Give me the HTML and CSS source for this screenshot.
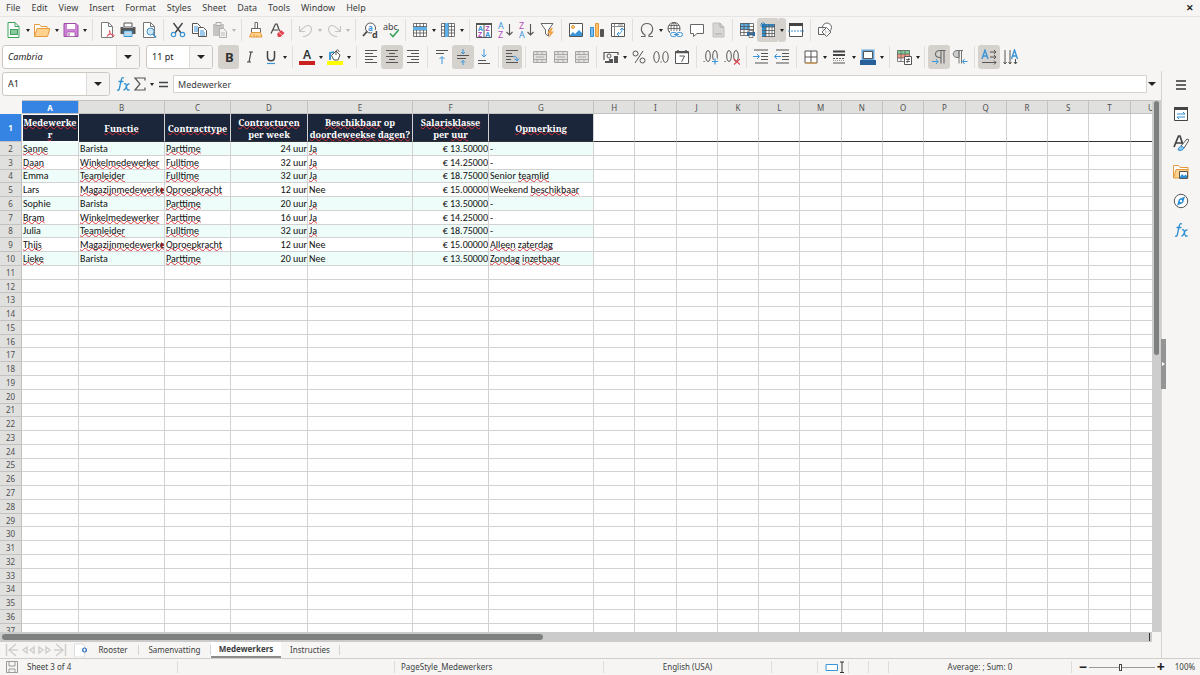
FILE: index.html
```html
<!DOCTYPE html>
<html lang="nl">
<head>
<meta charset="utf-8">
<title>Medewerkers</title>
<link rel="stylesheet" href="styles.css">
</head>
<body>
<svg class="defs" aria-hidden="true">
  <defs>
    <g id="i-new"><path d="M2 .5h7l4 4v11H2z" fill="#fff" stroke="#3da35d"/><path d="M9 .5v4h4" fill="none" stroke="#3da35d"/><path d="M4 7h8v6H4z" fill="#3da35d"/><path d="M5 9h6M5 11h6" stroke="#fff" stroke-width=".8"/></g>
    <g id="i-open"><path d="M.5 14V2.500h5l1.500 2h6v3" fill="#fff" stroke="#e59a3c"/><path d="M.5 14.500 3 6.500h13l-2.500 8z" fill="#ffd28f" stroke="#e59a3c"/></g>
    <g id="i-save"><path d="M1 1.500h12l2 2v11H1z" fill="#cf83d6" stroke="#9c4ea5"/><path d="M4 2h8v5H4z" fill="#fff"/><path d="M4 10h8v4.500H4z" fill="#fff" stroke="#9c4ea5" stroke-width=".7"/><path d="M6 11v3" stroke="#9c4ea5"/></g>
    <g id="i-pdf"><path d="M2.500.5h7l4 4v11h-11z" fill="#fff" stroke="#7c7c7c"/><path d="M9.500.5v4h4" fill="none" stroke="#7c7c7c"/><path d="M7.500 15c3-2 3.500-5 3-7M8 13.500c2-1.500 5-1.500 7.500 0M10.500 9c.5 2 2 4 4.500 6" fill="none" stroke="#e2545f"/></g>
    <g id="i-print"><path d="M4 1h8v4H4z" fill="#fff" stroke="#555"/><path d="M.5 5h15v7H.5z" fill="#555"/><path d="M3 5.500h10" stroke="#aaa"/><path d="M4 9h8v5.500H4z" fill="#fff" stroke="#2f8fd3"/><path d="M5 11h6M5 13h6" stroke="#6cb5e6"/></g>
    <g id="i-preview"><path d="M2.500.5h7l4 4v11h-11z" fill="#fff" stroke="#777"/><path d="M9.500.5v4h4" fill="none" stroke="#777"/><circle cx="9.500" cy="9.500" r="3.500" fill="#cfe7f8" stroke="#3f8fca"/><path d="m12 12 3 3.500" stroke="#3f8fca" stroke-width="1.500"/></g>
    <g id="i-cut"><path d="M3.500 1 11 11M12.500 1 5 11" stroke="#444" stroke-width="1.400"/><circle cx="3.500" cy="12.500" r="2.200" fill="#fff" stroke="#3a94d8" stroke-width="1.200"/><circle cx="12.500" cy="12.500" r="2.200" fill="#fff" stroke="#3a94d8" stroke-width="1.200"/></g>
    <g id="i-copy"><path d="M1.500 1.500h5l3 3v7h-8z" fill="#fff" stroke="#555"/><path d="M3 5h4M3 7h4M3 9h4" stroke="#3a94d8"/><path d="M7.500 5.500h5l3 3v6h-8z" fill="#fff" stroke="#555"/><path d="M9 9h4M9 11h5M9 13h5" stroke="#3a94d8"/></g>
    <g id="i-paste"><path d="M1 2h11v12H1z" fill="#c5c4c3"/><path d="M4 .5h5v3H4z" fill="#eee" stroke="#aaa"/><path d="M7.500 6.500h4l3 3v6h-7z" fill="#f2f2f2" stroke="#b0afae"/><path d="M9 11h4M9 13h4" stroke="#bbb"/></g>
    <g id="i-brush"><path d="M7 .5h2.500v6H7z" fill="#fff" stroke="#666"/><path d="M3.500 6.500h9v4h-9z" fill="#fff" stroke="#666"/><path d="M3.500 10.500h9l1.500 4.500H1.500z" fill="#ffd28f" stroke="#e59a3c"/><path d="M6 15v-3M9 15v-2" stroke="#e59a3c"/></g>
    <g id="i-clear"><path d="M2 11.500 6.500 2h1.500l2.500 7M4 8h5" fill="none" stroke="#444" stroke-width="1.200"/><path d="m8 12 4-4 3.500 3-4 4H9z" fill="#e2454f"/><path d="m10 10.500 3 2.500" stroke="#f7a5aa"/></g>
    <g id="i-undo"><path d="M5 14.500h2c8-3 8-11 3-11-3 0-5 3-8 5.500M1.500 4v5.500H7" fill="none" stroke="#c5c4c2" stroke-width="1.100"/></g>
    <g id="i-redo"><path d="M11 14.500H9c-8-3-8-11-3-11 3 0 5 3 8 5.500M14.500 4v5.500H9" fill="none" stroke="#c5c4c2" stroke-width="1.100"/></g>
    <g id="i-find"><circle cx="8.500" cy="6" r="5" fill="#fff" stroke="#555"/><path d="M5 9.500 1 14" stroke="#444" stroke-width="1.800"/><path d="M10 8h6v8h-6z" fill="#f6f5f4"/><text x="6" y="9" font-size="8" font-weight="700" fill="#3a94d8">a</text><text x="10" y="15.500" font-size="9" font-weight="700" fill="#444">d</text></g>
    <g id="i-abc"><text x="0" y="7.500" font-size="9" fill="#444">abc</text><path d="m7 11.500 3 3 6-7" fill="none" stroke="#3da35d" stroke-width="1.600"/></g>
    <g id="i-row"><path d="M1.500 1.500h13v13h-13z" fill="#fff"/><path d="M1.500 1.500h13v13h-13zM4.500 1v14M8 1v14M11.500 1v14M1 11h14M1 8h14M1 4.500h14" fill="none" stroke="#555" stroke-width=".8"/><path d="M1 5h14v3H1z" fill="#5eb0ea"/></g>
    <g id="i-col"><path d="M1.500 1.500h13v13h-13z" fill="#fff"/><path d="M1.500 1.500h13v13h-13zM4.500 1v14M8.500 1v14M11.500 1v14M1 11h14M1 8h14M1 4.500h14" fill="none" stroke="#555" stroke-width=".8"/><path d="M5 1h3.500v14H5z" fill="#5eb0ea"/></g>
    <g id="i-sort"><path d="M.5 1.500h15v14H.5z" fill="#fff" stroke="#555"/><path d="M0 2h16" stroke="#555" stroke-width="2"/><path d="M8 2v13.500" stroke="#555"/><g font-size="7" font-weight="700"><text x="2" y="9" fill="#3a94d8">A</text><text x="2" y="15" fill="#b44dbd">Z</text><text x="9.500" y="9" fill="#b44dbd">Z</text><text x="9.300" y="15" fill="#3a94d8">A</text></g></g>
    <g id="i-az"><text x="1" y="7" font-size="9" fill="#3a94d8">A</text><text x="1" y="15.500" font-size="9" fill="#b44dbd">Z</text><path d="M12.500 2v11M9.500 10l3 3 3-3" fill="none" stroke="#555" stroke-width="1.100"/></g>
    <g id="i-za"><text x="1" y="7" font-size="9" fill="#b44dbd">Z</text><text x="1" y="15.500" font-size="9" fill="#3a94d8">A</text><path d="M12.500 2v11M9.500 10l3 3 3-3" fill="none" stroke="#555" stroke-width="1.100"/></g>
    <g id="i-filter"><path d="M2 1.500h12L9.500 8v6L6.500 12V8z" fill="#fff" stroke="#666"/><path d="M12 6 8 11.500h3L9.500 16 15 9.500h-3L14 6z" fill="#f0a040"/></g>
    <g id="i-image"><path d="M1.500 1.500h13v13h-13z" fill="#fff" stroke="#555"/><circle cx="5" cy="5" r="1.500" fill="#ffd28f" stroke="#e59a3c"/><path d="m2 13 3-3 2 2 4-4 3 3v3H2z" fill="#3a94d8"/></g>
    <g id="i-chart"><path d="M1.500 5.500h3v9h-3z" fill="#78bdea" stroke="#2f8fd3"/><path d="M6.500 1.500h3v13h-3z" fill="#ffc06a" stroke="#e59a3c"/><path d="M11.500 7.500h3v7h-3z" fill="#555" stroke="#555"/></g>
    <g id="i-pivot"><path d="M1.500 1.500h13v13h-13z" fill="#fff" stroke="#555"/><path d="M1.500 4.500h13M4.500 2v12M8 3h5" stroke="#888"/><path d="M12 6c0 4-1 6-5 6M10 8l2-2 2 2M9 10l-2 2 2 2" fill="none" stroke="#3a94d8"/></g>
    <g id="i-omega"><path d="M2 14.500h4v-1.500C0 9 2 1.500 8 1.500S16 9 10 13v1.500h4" fill="none" stroke="#666" stroke-width="1.200"/></g>
    <g id="i-link"><circle cx="7" cy="6.500" r="6" fill="#fff" stroke="#555"/><path d="M1 6.500h12M7 .5v12M2 3.500h10M2 9.500h10" stroke="#555" stroke-width=".8"/><ellipse cx="7" cy="6.500" rx="3" ry="6" fill="none" stroke="#555" stroke-width=".8"/><path d="M3 9h13v7H3z" fill="#f6f5f4"/><rect x="3.500" y="10.500" width="6" height="4" rx="2" fill="none" stroke="#3a94d8"/><rect x="9.500" y="10.500" width="6" height="4" rx="2" fill="none" stroke="#3a94d8"/><path d="M7 12.500h5" stroke="#3a94d8"/></g>
    <g id="i-comment"><path d="M1.500 2.500h13v9H8l-3.500 3v-3h-3z" fill="#fff" stroke="#666"/></g>
    <g id="i-doc"><path d="M3 1h7l4 4v10H3z" fill="#d7d6d5" stroke="#c0bfbe"/><path d="M10 1v4h4M5 12h7" fill="none" stroke="#aaa"/></g>
    <g id="i-prange"><path d="M1.500 1.500h13v12h-13z" fill="#fff"/><path d="M1 1h10v7H1z" fill="#5eb0ea"/><path d="M1.500 1.500h13v12h-13zM5 1v12M9 1v12M1 4.500h14M1 7.500h14M1 10.500h14" fill="none" stroke="#555" stroke-width=".8"/><path d="M8 10h8v4H8z" fill="#2f6da3"/><path d="M10 8.500h4v2h-4zM10 13h4v2.500h-4z" fill="#fff" stroke="#555" stroke-width=".7"/></g>
    <g id="i-freeze"><path d="M2 2h13v13H2z" fill="#fff"/><path d="M2 2h13v3H2zM2 2h4v13H2z" fill="#2f8fd3"/><path d="M2 5h13M2 8.500h13M2 11.500h13M6 2v13M9 2v13M12 2v13M2 14.500h13M14.500 2v13" stroke="#555" stroke-width=".8"/><path d="M0 3h6M3 0v6M1 1l4 4M5 1 1 5" stroke="#1d72b8" stroke-width=".8"/></g>
    <g id="i-split"><path d="M1.500 1.500h13v13h-13z" fill="#fff" stroke="#555"/><path d="M1 2.500h14" stroke="#444" stroke-width="3"/><path d="M0 9h16" stroke="#3a94d8" stroke-dasharray="2 1"/></g>
    <g id="i-shapes"><circle cx="10" cy="5.500" r="4.500" fill="#fff" stroke="#666"/><path d="M1.500 5.500h7v7h-7z" fill="#fff" fill-opacity=".6" stroke="#666"/><path d="m9.500 5.500 4.500 4.500-4.500 4.500L5 10z" fill="#fff" fill-opacity=".7" stroke="#666"/></g>
    <g id="i-bold"><text x="4" y="13" font-size="13" font-weight="700" fill="#333">B</text></g>
    <g id="i-italic"><path d="M7 3h4M5 13h4M9 3l-2 10" stroke="#444" stroke-width="1.200"/></g>
    <g id="i-underline"><path d="M4.500 2v6c0 5 7 5 7 0V2" fill="none" stroke="#444" stroke-width="1.500"/><path d="M4 14.500h8" stroke="#3a94d8" stroke-width="1.200"/></g>
    <g id="i-color"><text x="4" y="10" font-size="12" font-weight="600" fill="#333">A</text><path d="M0 12h16v4H0z" fill="#c9211e"/></g>
    <g id="i-fill"><path d="M4.500 6.500 9 2l4 4-2 5H7z" fill="#fff" stroke="#555"/><path d="M9 6V2c1-2 3-1 3 1" fill="none" stroke="#555"/><path d="M3 11V4l4-1" fill="none" stroke="#2f8fd3" stroke-width="1.800"/><path d="M0 12h16v4H0z" fill="#ff0"/></g>
    <g id="i-left"><path d="M2 1.500h12M2 4.500h8M2 7.500h12M2 10.500h8M2 13.500h12" stroke="#555"/></g>
    <g id="i-center"><path d="M2 1.500h12M5 4.500h6M2 7.500h12M5 10.500h6M2 13.500h12" stroke="#555"/></g>
    <g id="i-right"><path d="M2 1.500h12M6 4.500h8M2 7.500h12M6 10.500h8M2 13.500h12" stroke="#555"/></g>
    <g id="i-top"><path d="M2 1.500h12M2 4.500h8" stroke="#555"/><path d="M8 15V8M5.500 10 8 7.500l2.500 2.500" fill="none" stroke="#3a94d8"/></g>
    <g id="i-mid"><path d="M2 6.500h12M2 9.500h9" stroke="#555"/><path d="M8 0v5M6 3l2 2 2-2M8 16v-4.500M6 13.500l2-2 2 2" fill="none" stroke="#3a94d8"/></g>
    <g id="i-bot"><path d="M2 14.500h12M2 11.500h8" stroke="#555"/><path d="M8 0v8M5.500 5.500 8 8l2.500-2.500" fill="none" stroke="#3a94d8"/></g>
    <g id="i-wrap"><path d="M2 1.500h12M2 4.500h6M2 7.500h7M2 10.500h5M2 13.500h12" stroke="#555"/><path d="M9 7.500c4 0 4 1 4 4M10.500 9.500l2.500 2.500 2-2.500" fill="none" stroke="#3a94d8"/></g>
    <g id="i-merge"><path d="M1.500 2.500h13v11h-13z" fill="#e2e1e0" stroke="#a5a4a3"/><path d="M1 5.500h14M1 10.500h14M5 2v3.500M10 2v3.500M5 10.500V14M10 10.500V14M4 8h8" stroke="#a5a4a3" stroke-width=".9"/></g>
    <g id="i-money"><path d="M1 11V3.500h14V6" fill="none" stroke="#555" stroke-width="1.200"/><circle cx="6" cy="7" r="2" fill="none" stroke="#555"/><path d="M6 10h4v4H6zM11 7h4v7h-4z" fill="#555"/><path d="M2 13h4" stroke="#555" stroke-width="2"/></g>
    <g id="i-percent"><circle cx="4.500" cy="4.500" r="2.500" fill="none" stroke="#555"/><circle cx="11.500" cy="11.500" r="2.500" fill="none" stroke="#555"/><path d="M12 2 4 14" stroke="#555"/></g>
    <g id="i-number"><ellipse cx="3.500" cy="8" rx="2.700" ry="5.500" fill="none" stroke="#555"/><ellipse cx="12.500" cy="8" rx="2.700" ry="5.500" fill="none" stroke="#555"/><path d="M7.500 13h1.200" stroke="#555"/></g>
    <g id="i-date"><path d="M1.500 2.500h13v12h-13z" fill="#fff" stroke="#555"/><path d="M1 3.500h14M4 1v3M12 1v3" stroke="#555" stroke-width="1.500"/><path d="M5.500 7h5L7.500 13" fill="none" stroke="#555"/></g>
    <g id="i-dadd"><ellipse cx="5" cy="7" rx="2.300" ry="5.500" fill="none" stroke="#555"/><ellipse cx="12" cy="7" rx="2.300" ry="5.500" fill="none" stroke="#555"/><path d="M.5 12.500h1.200" stroke="#555"/><path d="M9 12.500h7M12.500 9v7" stroke="#f6f5f4" stroke-width="3"/><path d="M9 12.500h6M12 9.500v6" stroke="#3a94d8" stroke-width="1.200"/></g>
    <g id="i-ddel"><ellipse cx="5" cy="7" rx="2.300" ry="5.500" fill="none" stroke="#555"/><ellipse cx="12" cy="7" rx="2.300" ry="5.500" fill="none" stroke="#555"/><path d="M.5 12.500h1.200" stroke="#555"/><path d="m10 10 6 5.500M16 10l-6 5.500" stroke="#e2454f" stroke-width="1.200"/></g>
    <g id="i-inc"><path d="M1 1h14M8 4.500h7M8 7.500h7M8 10.500h7M2 14h13" stroke="#555"/><path d="M0 7.500h6M4 5l2.500 2.500L4 10" fill="none" stroke="#3a94d8"/></g>
    <g id="i-dec"><path d="M2 1h13M8 4.500h7M8 7.500h7M8 10.500h7M2 14h13" stroke="#555"/><path d="M7 7.500H1M3 5 .5 7.500 3 10" fill="none" stroke="#3a94d8"/></g>
    <g id="i-border"><path d="M2 2h12v12H2z" fill="#fff" stroke="#555"/><path d="M8 2v12M2 8h12" stroke="#555"/><path d="M2 14h12" stroke="#e59a3c"/></g>
    <g id="i-bstyle"><path d="M2 2.500h12M2 6h12" stroke="#444" stroke-width="2"/><path d="M2 9.500h12" stroke="#555" stroke-dasharray="2 1"/><path d="M2 11.500h12" stroke="#999" stroke-dasharray="1 1"/><path d="M2 14h12" stroke="#555"/></g>
    <g id="i-bcolor"><path d="M2.500 1.500h11v9h-11z" fill="#fff" stroke="#6aa9dc" stroke-width="2"/><path d="M3.500 2.500h9v7h-9z" fill="none" stroke="#555"/><path d="M0 11h16v5H0z" fill="#2a6099"/></g>
    <g id="i-cond"><path d="M1 1h13v4H1z" fill="#7fcf98"/><path d="M1 5h13v4H1z" fill="#f29a80"/><path d="M1.500 1.500h12v11h-12zM1 5h12M1 9h12M5 1v12M9 1v12" fill="none" stroke="#666" stroke-width=".8"/><path d="M8.500 7.500h7v8h-7z" fill="#fff" stroke="#555"/><path d="M10 10.500h4M10 12.500h4M13 9l-2 5" stroke="#444" stroke-width=".8"/></g>
    <g id="i-ltr"><path d="M14.500 1.500H9c-6 0-6 7 0 7h1M10 1.500v13M13 1.500v13" fill="none" stroke="#666" stroke-width="1.100"/><path d="M1 12.500h6M5 10l2 2.500L5 15" fill="none" stroke="#3a94d8"/></g>
    <g id="i-rtl"><path d="M7 1.500H5c-5 0-5 7 0 7h2z" fill="#ccc" stroke="#777"/><path d="M6 1.500h5M7 1.500v13M9.500 1.500v13" stroke="#777"/><path d="M15.500 12.500h-5M12.500 10l-2 2.500 2 2.500" fill="none" stroke="#3a94d8"/></g>
    <g id="i-dirh"><path d="m1 10 3-9 3 9M2 7h4" fill="none" stroke="#3a94d8" stroke-width="1.400"/><path d="M9 3h6M9 8h6M1 13.500h14M13 1l2 2-2 2M13 6l2 2-2 2M13 11.500l2 2-2 2" fill="none" stroke="#555"/></g>
    <g id="i-dirv"><path d="m8.500 10 3-9 3 9M10 7h4" fill="none" stroke="#3a94d8" stroke-width="1.400"/><path d="M2 1v14M7 1v14M12.500 10v5M.5 13 2 15l1.500-2M5.500 13 7 15l1.500-2M11 13l1.500 2 1.500-2" fill="none" stroke="#555"/></g>
    <g id="i-fx"><path d="M9 2C7 1 6.500 2.500 6 5l-1.500 7C4 14.500 3 14.500 2 14M3.500 5.500h5M9 8c2-1 2 0 2.500 3s1.500 4 3 2.500M14.500 8c-2-.5-3 2-3.500 3.500S9.500 14 8.500 14" fill="none" stroke="#2f8fd3" stroke-width="1.300"/></g>
    <g id="i-sigma"><path d="M13 4.500V2H3l5 6-5 6h10v-2.500" fill="none" stroke="#555" stroke-width="1.200"/></g>
    <g id="i-equals"><path d="M4 6.500h9M4 10.500h9" stroke="#444" stroke-width="1.700"/></g>
    <g id="i-menu"><path d="M3 4h10M3 8h10M3 12h10" stroke="#333" stroke-width="1.500"/></g>
    <g id="i-props"><path d="M1.500 1.500h13v13h-13z" fill="#fff" stroke="#444"/><path d="M1 2.500h14" stroke="#444" stroke-width="3"/><path d="M4 8h8l-2-2M12 11H4l2 2" fill="none" stroke="#2f8fd3"/></g>
    <g id="i-styles"><path d="M1 12 5.500 1H7l3 9M3 8h6" fill="none" stroke="#444" stroke-width="1.700"/><path d="m8 11 6-7 2 1-5 8z" fill="#fff" stroke="#555"/><path d="M5 15c1-4 4-5 6-2-1 2-3 3-6 2z" fill="#8bc7ef" stroke="#2f8fd3"/></g>
    <g id="i-gallery"><path d="M.5 14V1.500h5l1.500 2h8V6" fill="#fff" stroke="#e59a3c"/><path d="M.5 14 3 5.500h12v8.500z" fill="#ffd28f" stroke="#e59a3c"/><path d="M6.500 7.500h8v7h-8z" fill="#fff" stroke="#555"/><path d="m7 13 2-3 2 2 1.500-1.500L14 12v2H7z" fill="#2f8fd3"/></g>
    <g id="i-nav"><circle cx="8" cy="8" r="6.700" fill="#fff" stroke="#555"/><path d="m12 3.500-2 6.500-6 2.500 2-6.500z" fill="#2f8fd3"/><circle cx="8" cy="8" r="1.200" fill="#fff"/></g>
    <g id="i-disk"><path d="M2.500 2.500h11v11h-11zM5 3v4h6V3M5 13v-3h6v3" fill="none" stroke="#999"/></g>
  </defs>
</svg>

<div class="app">
  <nav class="menubar" aria-label="Menu">
    <button>File</button><button>Edit</button><button>View</button><button>Insert</button><button>Format</button><button>Styles</button><button>Sheet</button><button>Data</button><button>Tools</button><button>Window</button><button>Help</button>
    <button class="close" aria-label="Close">✕</button>
  </nav>

  <div class="toolbar" data-tools="new+ open+ save+|pdf print preview|cut copy paste-|brush clear|undo- redo-|find abc|row+ col+|sort az za filter|image chart pivot|omega+ link comment doc|prange freeze+* split|shapes"></div>

  <div class="toolbar format">
    <div class="combo font"><input class="slanted" aria-label="Font name" value="Cambria"><button class="drop" aria-label="Font list"></button></div>
    <div class="combo size"><input aria-label="Font size" value="11 pt"><button class="drop" aria-label="Size list"></button></div>
    <div class="tools" data-tools="bold* italic underline+|color+ fill+|left center* right|top mid* bot|wrap*|merge merge merge|money+ percent number date|dadd ddel|inc dec|border+ bstyle+ bcolor+|cond+|ltr* rtl|dirh* dirv"></div>
  </div>

  <div class="workspace">
    <main class="main">
      <div class="formula">
        <div class="combo name"><input aria-label="Name box" value="A1"><button class="drop" aria-label="Names"></button></div>
        <div class="tools formula-tools" data-tools="fx sigma+ equals"></div>
        <input class="formula-input" aria-label="Formula" value="Medewerker">
        <button class="drop expand" aria-label="Expand formula bar"></button>
      </div>
      <div class="sheet-area">
        <div class="sheet">
          <table class="grid">
            <colgroup><col class="c-num"><col class="c-a"><col class="c-b"><col class="c-c"><col class="c-d"><col class="c-e"><col class="c-f"><col class="c-g"><col span="14"></colgroup>
            <thead></thead>
            <tbody></tbody>
          </table>
        </div>
        <div class="vscroll"><div class="vthumb"></div></div>
      </div>
      <div class="hscroll"><div class="hthumb"></div><div class="hend"></div></div>
      <div class="tabs">
        <svg class="nav-arrows" viewBox="0 0 62 14" aria-hidden="true"><path d="M1.500 1v12M11 1 4 7l7 6M5 7h8M22 4l-4 3 4 3zM29 4l-4 3 4 3zM34 4l4 3-4 3zM41 4l4 3-4 3zM51 1l7 6-7 6M57 7h-8M60.500 1v12" fill="none" stroke="#d0cfce" stroke-width="1.500"/></svg>
        <button class="add" aria-label="Add sheet"><svg viewBox="0 0 14 14"><path d="M.5 1h8l2 2v11H.5z" fill="#fff" stroke="#ddd"/><circle cx="10.500" cy="7" r="2.500" fill="#3a76bd"/><path d="M9 7h3M10.500 5.500v3" stroke="#fff"/></svg></button>
        <button class="tab t-a">Rooster</button><button class="tab t-b">Samenvatting</button><button class="tab t-c active">Medewerkers</button><button class="tab t-d">Instructies</button>
      </div>
    </main>
    <aside class="sidebar">
      <button class="handle" aria-label="Hide sidebar"></button>
      <button aria-label="Settings"><svg viewBox="0 0 16 16"><use href="#i-menu"/></svg></button>
      <button aria-label="Properties"><svg viewBox="0 0 16 16"><use href="#i-props"/></svg></button>
      <button aria-label="Styles"><svg viewBox="0 0 16 16"><use href="#i-styles"/></svg></button>
      <button aria-label="Gallery"><svg viewBox="0 0 16 16"><use href="#i-gallery"/></svg></button>
      <button aria-label="Navigator"><svg viewBox="0 0 16 16"><use href="#i-nav"/></svg></button>
      <button aria-label="Functions"><svg viewBox="0 0 16 16"><use href="#i-fx"/></svg></button>
    </aside>
  </div>

  <footer class="status">
    <div class="s-sheet"><svg viewBox="0 0 16 16"><use href="#i-disk"/></svg>Sheet 3 of 4</div>
    <div class="s-gap"></div>
    <div class="s-style">PageStyle_Medewerkers</div>
    <div class="s-lang">English (USA)</div>
    <div class="s-blank"></div>
    <div class="s-mode"><svg viewBox="0 0 20 12"><path d="M1 3.500h11.500v6H1z" fill="#fff" stroke="#3a94d8"/><path d="M15 1h4M15 11.500h4M17 1v10.500" stroke="#333"/></svg></div>
    <div class="s-small"></div>
    <div class="s-small"></div>
    <div class="s-sum">Average: ; Sum: 0</div>
    <div class="s-zoom"><button aria-label="Zoom out">−</button><input type="range" aria-label="Zoom" min="0" max="100" value="48"><button aria-label="Zoom in">+</button><span class="pct">100%</span></div>
  </footer>
</div>
<script src="app.js"></script>
</body>
</html>
```
FILE: styles.css
```css
* { box-sizing: border-box; }

body {
  margin: 0;
  background: #f6f5f4;
  color: #3b3e40;
  font: 9px/12px "Noto Sans", sans-serif;
}

button, input {
  margin: 0;
  padding: 0;
  border: 0;
  background: none;
  color: inherit;
  font: inherit;
}

.defs { position: absolute; width: 0; height: 0; }

.app { display: flex; flex-direction: column; height: 100vh; overflow: hidden; }

/* Menu bar */
.menubar {
  display: flex;
  align-items: center;
  gap: 11px;
  height: 16px;
  padding: 0 6px;
  flex: none;
}
.menubar .close { margin-left: auto; color: #222; font-weight: 700; }

/* Toolbars */
.toolbar {
  display: flex;
  align-items: center;
  height: 27px;
  flex: none;
  border-top: 1px solid #e6e5e3;
}
.toolbar.format { height: 28px; border-top: 0; }
.tools { display: flex; }
.group {
  display: flex;
  align-items: center;
  height: 22px;
  padding: 0 3px;
  border-right: 1px solid #e0dfdd;
}
.group:last-child { border-right: 0; }
.n1 { width: 27px; }
.n1d1 { width: 35px; }
.n2 { width: 50px; }
.n2d2 { width: 64px; }
.n3 { width: 71px; }
.n3d1 { width: 78px; }
.n3d3 { width: 93px; }
.n4 { width: 92px; }
.n4d1 { width: 100px; }

.tool {
  flex: 3 1 0;
  min-width: 0;
  height: 24px;
  display: flex;
  align-items: center;
  justify-content: center;
  border-radius: 3px;
}
.tool svg { width: 16px; height: 16px; flex: none; font-family: "Noto Sans", sans-serif; }
.arrow {
  flex: 1 1 0;
  min-width: 0;
  height: 24px;
  display: flex;
  align-items: center;
  justify-content: center;
}
.arrow::before, .drop::before {
  content: "";
  border: 2px solid transparent;
  border-top: 3px solid #222;
  border-bottom: 0;
}
.arrow.off::before { border-top-color: #b9b8b6; }
.on { background: #d5d1cd; }
.tool.on + .arrow.on { border-radius: 0 3px 3px 0; }

.combo {
  display: flex;
  height: 24px;
  border: 1px solid #cdc7c2;
  border-radius: 3px;
  background: #fff;
  overflow: hidden;
}
.combo input { flex: 1; min-width: 0; padding-left: 5px; color: #222; }
.combo .slanted { font-style: italic; }
.drop { width: 23px; display: flex; align-items: center; justify-content: center; }
.drop::before { border-width: 4px 4px 0; }
.combo .drop { background: #f6f5f4; border-left: 1px solid #dedbd8; }
.combo.font { width: 138px; margin-left: 2px; }
.combo.size { width: 67px; margin: 0 2px 0 6px; }
.combo.name { width: 108px; margin-left: 2px; flex: none; }

/* Formula bar */
.workspace { display: flex; flex: 1; min-height: 0; }
.main { display: flex; flex-direction: column; flex: 1; min-width: 0; }
.formula { display: flex; align-items: center; height: 29px; padding-bottom: 3px; flex: none; }
.formula-tools { margin-left: 3px; flex: none; }
.formula-tools .group { width: 60px; padding: 0 1px; border: 0; }
.formula-input {
  flex: 1;
  min-width: 0;
  height: 18px;
  padding-left: 4px;
  border: 1px solid #d6d3d0;
  background: #fff;
}
.drop.expand { width: 14px; padding-right: 4px; }

/* Spreadsheet */
.sheet-area { display: flex; flex: 1; min-height: 0; }
.sheet { flex: 1; min-width: 0; overflow: hidden; background: #fff; }
.grid {
  width: 1172px;
  height: 538px;
  table-layout: fixed;
  border-collapse: separate;
  border-spacing: 0;
}
.c-num { width: 22px; }
.c-a { width: 57px; }
.c-b { width: 86px; }
.c-c { width: 66px; }
.c-d { width: 77px; }
.c-e { width: 105px; }
.c-f { width: 76px; }
.c-g { width: 105px; }

.grid th, .grid td {
  padding: 0;
  border-right: 1px solid #d2d2d2;
  border-bottom: 1px solid #d2d2d2;
  white-space: nowrap;
  overflow: hidden;
}
.grid thead tr { height: 14px; }
.grid thead th, .grid tbody th {
  background: #e0e0df;
  border-color: #c3c2c1;
  color: #505050;
  font: 8px/11px "Noto Sans", sans-serif;
  text-align: center;
}
.grid thead th { border-top: 1px solid #c3c2c1; }
.grid thead .corner { background: #f6f5f4; border-color: #f6f5f4; }
.grid thead .sel, .grid tbody th.sel { background: #3584e4; color: #fff; font-weight: 700; }
.grid td {
  position: relative;
  padding: 0 0 0 1px;
  color: #111;
  font: 10px/11px Carlito, Lato, sans-serif;
}
.grid td.num { text-align: right; }
.grid .band td.data { background: #effdfa; }
.grid .title { height: 28px; }
.grid .title td { border-bottom-color: #333; }
.grid .title td.data {
  background: #1c263b;
  color: #fff;
  font: 700 9px/12px "Noto Serif", "DejaVu Serif Condensed", "DejaVu Serif", serif;
  text-align: center;
  white-space: pre;
  padding: 2px 0 0;
}
.grid .title td.cursor { outline: 1px solid #fff; outline-offset: -1px; }
.misspelt {
  text-decoration: underline wavy #d8343c 1px;
  text-decoration-skip-ink: none;
  text-underline-offset: -1px;
}
.cut::after {
  content: "";
  position: absolute;
  right: 0;
  top: 4px;
  border: 3px solid transparent;
  border-left: 3px solid #a02020;
  border-right: 0;
}

/* Scroll bars */
.vscroll { width: 9px; padding: 1px 2px; background: #cdcdcd; }
.vthumb { height: 48%; border-radius: 3px; background: #7e7f7f; }
.hscroll { display: flex; align-items: center; height: 10px; margin-right: 9px; padding-left: 2px; background: #cbcbcb; flex: none; }
.hthumb { width: 47%; height: 6px; border-radius: 3px; background: #7e7f7f; }
.hend { width: 3px; height: 8px; margin-left: auto; border-left: 1px solid #333; }

/* Sheet tabs */
.tabs { display: flex; height: 16px; flex: none; align-items: center; font-size: 8px; }
.nav-arrows { width: 62px; height: 14px; margin-left: 5px; }
.add { width: 21px; padding: 0 4px; }
.add svg { width: 14px; height: 14px; display: block; margin-left: 3px; }
.tab { border-right: 1px solid #d5d3d0; line-height: 10px; }
.t-a { width: 51px; }
.t-b { width: 72px; }
.t-c { width: 70px; }
.t-d { width: 59px; }
.tab.active {
  align-self: stretch;
  background: #fff;
  border-right: 0;
  border-bottom: 2px solid #8c8c8c;
  font-weight: 700;
}

/* Sidebar */
.sidebar {
  position: relative;
  width: 39px;
  display: flex;
  flex-direction: column;
  align-items: center;
  gap: 13px;
  padding-top: 6px;
  border-left: 1px solid #d5d3d0;
  flex: none;
}
.sidebar svg { display: block; width: 16px; height: 16px; }
.sidebar .handle {
  position: absolute;
  left: -1px;
  top: 268px;
  width: 5px;
  height: 50px;
  background: #949494;
}
.handle::before {
  content: "";
  position: absolute;
  left: 1px;
  top: 23px;
  border: 2px solid transparent;
  border-left: 3px solid #fff;
  border-right: 0;
}

/* Status bar */
.status {
  display: flex;
  align-items: stretch;
  height: 17px;
  border-top: 1px solid #d0cecb;
  flex: none;
  font-size: 8px;
}
.status > div {
  display: flex;
  align-items: center;
  justify-content: center;
  margin: 2px 0;
  border-right: 1px solid #dfdddb;
}
.status > div:last-child { border: 0; }
.status .s-sheet { width: 178px; justify-content: flex-start; gap: 7px; padding-left: 4px; }
.s-sheet svg { width: 16px; height: 16px; }
.s-gap { width: 217px; }
.status .s-style { flex: 1; justify-content: flex-start; padding-left: 6px; }
.s-lang { width: 168px; }
.s-blank { width: 46px; }
.s-mode { width: 31px; }
.s-mode svg { width: 20px; height: 12px; margin-left: 4px; }
.s-small { width: 20px; }
.s-sum { width: 183px; }
.s-zoom { width: 128px; }
.s-zoom button { width: 12px; font-size: 14px; font-weight: 700; color: #222; }
.s-zoom input { appearance: none; width: 66px; height: 12px; background: linear-gradient(#999, #999) center / 100% 1px no-repeat; }
.s-zoom input::-webkit-slider-thumb { appearance: none; width: 3px; height: 7px; border: 1px solid #444; background: #fff; }
.pct { margin-left: 8px; }
```
FILE: app.js
```javascript
/* Toolbar spec: "|" splits groups; "+" adds a drop-down arrow, "-" a disabled one, "*" marks a pressed tool. */
document.querySelectorAll('[data-tools]').forEach(function (bar) {
  bar.dataset.tools.split('|').forEach(function (spec) {
    var group = document.createElement('div');
    var items = spec.split(' ');
    var drops = 0;
    var html = '';
    items.forEach(function (item) {
      var name = item.replace(/[^a-z]/g, '');
      var on = item.includes('*') ? ' on' : '';
      html += '<button class="tool' + on + '" aria-label="' + name + '"><svg viewBox="0 0 16 16"><use href="#i-' + name + '"/></svg></button>';
      if (/[+-]/.test(item)) {
        drops += 1;
        html += '<button class="arrow' + on + (item.includes('-') ? ' off' : '') + '" aria-label="' + name + ' options"></button>';
      }
    });
    group.className = 'group n' + items.length + (drops ? 'd' + drops : '');
    group.innerHTML = html;
    bar.append(group);
  });
});

/* Words between tildes are flagged by the spelling checker. */
var rows = [
  ['~Medewerke~\n~r~', '~Functie~', '~Contracttype~', '~Contracturen~\nper week', '~Beschikbaar~ op\n~doordeweekse~ ~dagen?~', '~Salarisklasse~\nper ~uur~', '~Opmerking~'],
  ['~Sanne~', 'Barista', '~Parttime~', '24 uur', '~Ja~', '€ 13.50000', '-'],
  ['~Daan~', '~Winkelmedewerker~', '~Fulltime~', '32 uur', '~Ja~', '€ 14.25000', '-'],
  ['Emma', '~Teamleider~', '~Fulltime~', '32 uur', '~Ja~', '€ 18.75000', 'Senior ~teamlid~'],
  ['Lars', '~Magazijnmedewerker~', '~Oproepkracht~', '12 uur', 'Nee', '€ 15.00000', 'Weekend ~beschikbaar~'],
  ['Sophie', 'Barista', '~Parttime~', '20 uur', '~Ja~', '€ 13.50000', '-'],
  ['~Bram~', '~Winkelmedewerker~', '~Parttime~', '16 uur', '~Ja~', '€ 14.25000', '-'],
  ['Julia', '~Teamleider~', '~Fulltime~', '32 uur', '~Ja~', '€ 18.75000', '-'],
  ['~Thijs~', '~Magazijnmedewerker~', '~Oproepkracht~', '12 uur', 'Nee', '€ 15.00000', '~Alleen~ ~zaterdag~'],
  ['~Lieke~', 'Barista', '~Parttime~', '20 uur', 'Nee', '€ 13.50000', '~Zondag~ ~inzetbaar~']
];
var letters = 'ABCDEFGHIJKLMNOPQRSTU'.split('');

document.querySelector('.grid thead').innerHTML = '<tr><th class="corner"></th>' + letters.map(function (l) {
  return '<th' + (l === 'A' ? ' class="sel"' : '') + '>' + l + '</th>';
}).join('') + '</tr>';

var body = '';
for (var r = 0; r < 37; r += 1) {
  var data = rows[r] || [];
  var rowClass = r === 0 ? 'title' : (data.length && r % 2 ? 'band' : '');
  body += '<tr class="' + rowClass + '"><th' + (r === 0 ? ' class="sel"' : '') + '>' + (r + 1) + '</th>';
  letters.forEach(function (l, c) {
    var text = data[c] || '';
    var cls = text ? 'data' : '';
    if (r > 0 && text && (c === 3 || c === 5)) cls += ' num';
    if (text.includes('Magazijn')) cls += ' cut';
    if (r === 0 && c === 0) cls += ' cursor';
    body += '<td class="' + cls + '">' + text.replace(/~([^~]+)~/g, '<span class="misspelt">$1</span>') + '</td>';
  });
  body += '</tr>';
}
document.querySelector('.grid tbody').innerHTML = body;
```
